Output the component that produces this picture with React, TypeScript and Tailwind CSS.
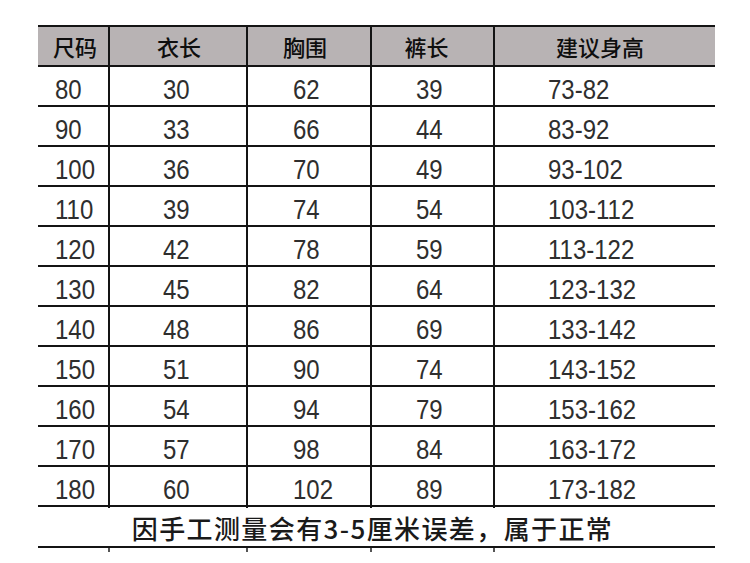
import React from "react";

const rows: string[][] = [
  ["80", "30", "62", "39", "73-82"],
  ["90", "33", "66", "44", "83-92"],
  ["100", "36", "70", "49", "93-102"],
  ["110", "39", "74", "54", "103-112"],
  ["120", "42", "78", "59", "113-122"],
  ["130", "45", "82", "64", "123-132"],
  ["140", "48", "86", "69", "133-142"],
  ["150", "51", "90", "74", "143-152"],
  ["160", "54", "94", "79", "153-162"],
  ["170", "57", "98", "84", "163-172"],
  ["180", "60", "102", "89", "173-182"],
];

const grid = "grid grid-cols-[72px_138px_124px_123px_220px]";

function Num({ v }: { v: string }) {
  return <span className="inline-block scale-y-[1.12]">{v}</span>;
}

export default function App() {
  return (
    <div className="w-[750px] h-[563px] bg-white pt-[25px] pl-[38px]">
      <div className="w-[677px] border-t-2 border-[#141414]">
        <div className={`${grid} h-[40px] bg-[#b8b3b4] border-b-2 border-[#141414] text-[22px] font-medium text-[#0e0e0e] [font-family:'Noto_Sans_CJK_SC',sans-serif]`}>
          <div className="flex items-center pl-[15px] border-r-2 border-[#141414]">尺码</div>
          <div className="flex items-center justify-center pl-[2px] border-r-2 border-[#141414]">衣长</div>
          <div className="flex items-center justify-center pr-[8px] border-r-2 border-[#141414]">胸围</div>
          <div className="flex items-center justify-center pr-[12px] border-r-2 border-[#141414]">裤长</div>
          <div className="flex items-center justify-center pr-[10px]">建议身高</div>
        </div>
        {rows.map((r, i) => (
          <div
            key={i}
            className={`${grid} h-[40px] border-b-2 border-[#141414] text-[24px] text-[#2e2e2e] [font-family:'Liberation_Sans',Arial,sans-serif]`}
          >
            <div className="flex items-center pt-[5px] pl-[17px] border-r-2 border-[#141414]"><Num v={r[0]} /></div>
            <div className="flex items-center pt-[5px] pl-[53px] border-r-2 border-[#141414]"><Num v={r[1]} /></div>
            <div className="flex items-center pt-[5px] pl-[45px] border-r-2 border-[#141414]"><Num v={r[2]} /></div>
            <div className="flex items-center pt-[5px] pl-[44px] border-r-2 border-[#141414]"><Num v={r[3]} /></div>
            <div className="flex items-center pt-[5px] pl-[53px]"><Num v={r[4]} /></div>
          </div>
        ))}
        <div className="h-[41px] border-b-2 border-[#141414] flex items-center justify-center pt-[2px] pr-[8px] text-[26px] tracking-[1.4px] font-medium text-[#1a1a1a] [font-family:'Noto_Sans_CJK_SC',sans-serif]">
          因手工测量会有3-5厘米误差，属于正常
        </div>
        <div className={`${grid} h-[4px]`}>
          <div className="border-r-2 border-[#555]"></div>
          <div className="border-r-2 border-[#555]"></div>
          <div className="border-r-2 border-[#555]"></div>
          <div className="border-r-2 border-[#555]"></div>
          <div></div>
        </div>
      </div>
    </div>
  );
}
